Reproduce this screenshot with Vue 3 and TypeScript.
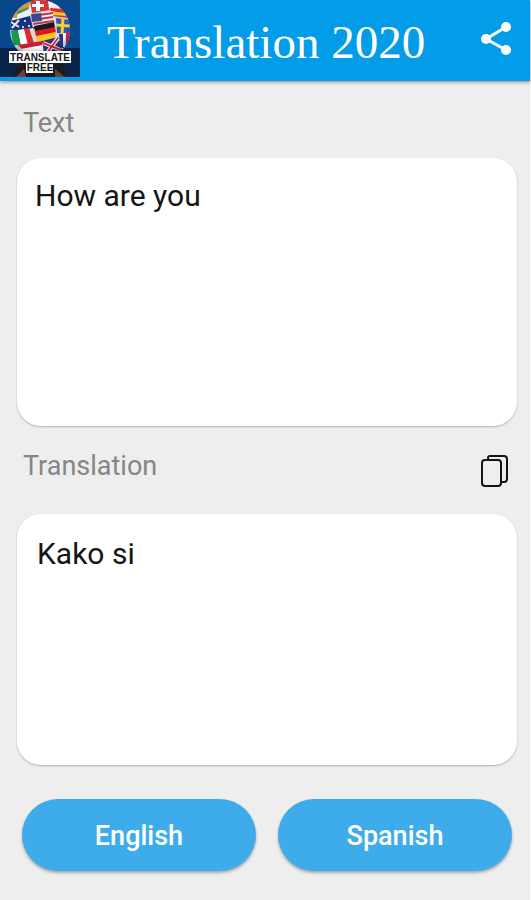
<script setup lang="ts">
import { ref } from 'vue'

const source = ref('How are you')
const result = ref('Kako si')
const languages = ['English', 'Spanish']

function copyResult(): void {
  navigator.clipboard?.writeText(result.value)
}
</script>

<template>
  <div class="page">
    <header class="bar">
      <svg class="logo" viewBox="0 0 80 77" role="img" aria-label="Translate Free">
        <defs>
          <linearGradient id="sky" x1="0" y1="0" x2="1" y2="1">
            <stop offset="0" stop-color="#07468d" />
            <stop offset="1" stop-color="#0b4b91" />
          </linearGradient>
          <radialGradient id="shade" cx="0.45" cy="0.4" r="0.6">
            <stop offset="0.65" stop-color="#000" stop-opacity="0" />
            <stop offset="1" stop-color="#000" stop-opacity="0.45" />
          </radialGradient>
          <clipPath id="globe"><circle cx="40" cy="30" r="30" /></clipPath>
        </defs>
        <rect width="80" height="77" fill="url(#sky)" />
        <rect y="48" width="80" height="29" fill="#082448" />
        <path d="M20 60h40l10 17H12z" fill="#181c27" />
        <path d="M24 69l-8 8h10zM55 69l10 8H55z" fill="#7c3a30" />
        <g clip-path="url(#globe)">
          <rect width="80" height="60" fill="#d9d8df" />
          <path d="M10 16l21-9 1 7-22 9z" fill="#edf0f2" />
          <path d="M10 13l18-8 1 4-19 9z" fill="#3a9c58" />
          <path d="M8 10h9v8H8z" fill="#ed8e29" />
          <path d="M17 1l14-1-2 7-14 5z" fill="#cc9c3b" />
          <path d="M30 0h18l2 10-18 3z" fill="#df3034" />
          <path d="M36 1h4v3h4v3h-4v4h-4V7h-4V4h4z" fill="#fff" />
          <path d="M48 0l12 5-1 7-10-3z" fill="#f6f4ed" />
          <path d="M50 8l14 1 4 9-16-2z" fill="#dc2731" />
          <path d="M51 11l14 2 2 3-15-1z" fill="#ffc431" />
          <path d="M31 14l22-3 1 15-21 3z" fill="#f1e8ec" />
          <path d="M32 16l21-3M32 20l21-3M33 24l21-3M33 28l21-3" stroke="#b73952" stroke-width="2" />
          <path d="M31 14l10-1 1 8-10 1z" fill="#39498c" />
          <path d="M10 21l20-5 3 12-16 3-7-1z" fill="#163280" />
          <path d="M11 22l8 5M19 20l-7 8" stroke="#e9e7f5" stroke-width="2" />
          <circle cx="25" cy="21" r="1" fill="#fff" />
          <circle cx="29" cy="26" r="1" fill="#fff" />
          <circle cx="23" cy="27" r="1" fill="#fff" />
          <path d="M34 26l20-4 1 6-20 4z" fill="#191a20" />
          <path d="M35 31l20-4 1 6-20 4z" fill="#d91722" />
          <path d="M36 36l20-4-1 6-18 4z" fill="#ffc51d" />
          <path d="M56 18l14 2v14l-13-1z" fill="#2858ab" />
          <path d="M56 25l14 1M63 18l-1 16" stroke="#ffcd2c" stroke-width="3" />
          <path d="M11 31l7-1 3 15h-8z" fill="#159b49" />
          <path d="M18 30l6-1 4 15-7 1z" fill="#fff" />
          <path d="M24 29l5-1 5 15-6 2z" fill="#de292d" />
          <path d="M18 45l24-4 1 4-21 4z" fill="#c81d3a" />
          <path d="M21 49l23-4 1 5-20 3z" fill="#f7f7f6" />
          <path d="M42 41l16-4 5 14-19 2z" fill="#243779" />
          <path d="M43 43l18 7M58 38L47 53" stroke="#fff" stroke-width="4" />
          <path d="M43 43l18 7M58 38L47 53" stroke="#d42942" stroke-width="2" />
          <path d="M59 34h4l1 14h-4z" fill="#1e3e93" />
          <path d="M63 33h3l-1 14h-2z" fill="#fff" />
          <path d="M66 32h4l-1 15h-3z" fill="#d7263d" />
          <rect width="80" height="60" fill="url(#shade)" />
        </g>
        <rect x="9" y="51" width="62" height="12" fill="#fff" />
        <rect x="26" y="62" width="27" height="11" fill="#fff" />
        <text class="logo-text" x="40" y="61">TRANSLATE</text>
        <text class="logo-text" x="40" y="71">FREE</text>
      </svg>
      <h1 class="title">Translation 2020</h1>
      <button class="icon-button share" type="button" aria-label="Share">
        <svg width="32" height="34" viewBox="0 0 32 34">
          <path d="M26 5L6 17l20 11" fill="none" stroke="#fff" stroke-width="3" />
          <circle cx="26" cy="5" r="5" fill="#fff" />
          <circle cx="6" cy="17" r="5" fill="#fff" />
          <circle cx="26" cy="28" r="5" fill="#fff" />
        </svg>
      </button>
    </header>

    <main class="content">
      <div class="row">
        <label class="label" for="source">Text</label>
      </div>
      <textarea id="source" v-model="source" class="card source" spellcheck="false"></textarea>

      <div class="row second">
        <label class="label" for="result">Translation</label>
        <button class="icon-button copy" type="button" aria-label="Copy translation" @click="copyResult">
          <svg width="28" height="34" viewBox="0 0 28 34" fill="none" stroke="#151515" stroke-width="2">
            <path d="M8 5V4q0-2 2-2h14q3 0 3 3v20q0 3-3 3h-2" />
            <rect x="2" y="6" width="19" height="26" rx="3" />
          </svg>
        </button>
      </div>
      <textarea id="result" v-model="result" class="card result" readonly></textarea>

      <div class="languages">
        <button v-for="language in languages" :key="language" class="language" type="button">
          {{ language }}
        </button>
      </div>
    </main>
  </div>
</template>

<style>
body {
  margin: 0;
  background: #eee;
}
</style>

<style scoped>
.page {
  box-sizing: border-box;
  min-height: 100vh;
  border-right: 1px solid #fafafa;
  font-family: Roboto, "Liberation Sans", sans-serif;
  background: #eee;
}

.bar {
  display: flex;
  align-items: center;
  box-sizing: border-box;
  height: 81px;
  padding: 0 18px 4px 0;
  background: #039ce9;
  box-shadow: 0 1px 4px rgba(0, 0, 0, 0.45);
}

.logo {
  flex: none;
  width: 80px;
  height: 77px;
}

.logo-text {
  font: 700 10px "Liberation Sans", sans-serif;
  text-anchor: middle;
  fill: #171717;
}

.title {
  flex: 1;
  margin: 0;
  padding: 6px 0 0 27px;
  font: 400 47px/56px "Liberation Serif", serif;
  white-space: nowrap;
  color: #fff;
}

.icon-button {
  display: flex;
  flex: none;
  padding: 0;
  border: 0;
  background: none;
  cursor: pointer;
}

.content {
  padding: 24px 13px 28px 17px;
}

.row {
  display: flex;
  align-items: flex-start;
  justify-content: space-between;
  height: 36px;
  margin-bottom: 17px;
  padding: 0 9px 0 6px;
}

.second {
  height: 40px;
  margin: 22px 0 26px;
}

.copy {
  align-self: flex-end;
}

.label {
  font-size: 27px;
  line-height: 36px;
  color: #868686;
}

.card {
  display: block;
  box-sizing: border-box;
  width: 100%;
  padding: 20px 18px;
  border: 0;
  border-radius: 24px;
  outline: 0;
  resize: none;
  font: 400 30px/36px Roboto, "Liberation Sans", sans-serif;
  color: #151515;
  background: #fff;
  box-shadow: 0 1px 2px rgba(0, 0, 0, 0.25);
}

.source {
  height: 268px;
}

.result {
  height: 251px;
  padding: 22px 20px;
}

.languages {
  display: flex;
  gap: 22px;
  margin-top: 34px;
  padding: 0 5px;
}

.language {
  flex: 1;
  height: 72px;
  padding: 2px 0 0;
  border: 0;
  border-radius: 36px;
  font: 500 27px/36px Roboto, "Liberation Sans", sans-serif;
  color: #fff;
  background: #3eacea;
  box-shadow: 0 2px 3px rgba(0, 0, 0, 0.3);
  cursor: pointer;
}
</style>
